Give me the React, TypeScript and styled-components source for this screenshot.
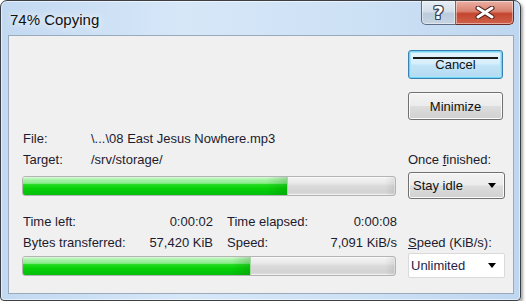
import React from "react";
import styled, { createGlobalStyle } from "styled-components";

const GlobalStyle = createGlobalStyle`
  html, body {
    margin: 0;
    padding: 0;
    background: #ffffff;
  }
  body {
    font-family: "Liberation Sans", Arial, sans-serif;
    font-size: 13px;
    color: #1d1b2e;
  }
`;

const Window = styled.div`
  box-sizing: border-box;
  width: 521px;
  height: 301px;
  border: 1px solid #3c3f44;
  border-radius: 7px 7px 4px 4px;
  padding: 0 6px 6px 7px;
  display: flex;
  flex-direction: column;
  background: linear-gradient(to right, #c2d9f1 0%, #d6e7f8 35%, #cde1f5 70%, #bed6ef 100%);
  box-shadow: 2px 2px 3px rgba(0, 0, 0, 0.35), inset 0 0 0 1px rgba(255, 255, 255, 0.55);
`;

const TitleBar = styled.div`
  height: 34px;
  display: flex;
  align-items: flex-start;
  flex-shrink: 0;
`;

const Title = styled.div`
  font-size: 15px;
  line-height: 17px;
  padding: 10px 0 0 2px;
  color: #111;
  text-shadow: 0 0 6px rgba(255, 255, 255, 0.95), 0 0 12px rgba(255, 255, 255, 0.85);
`;

const CaptionButtons = styled.div`
  margin-left: auto;
  display: flex;
  height: 24px;
`;

const CaptionButton = styled.div<{ $variant: "help" | "close" }>`
  box-sizing: border-box;
  height: 24px;
  width: ${(p) => (p.$variant === "help" ? 35 : 58)}px;
  display: flex;
  align-items: center;
  justify-content: center;
  border: 1px solid ${(p) => (p.$variant === "help" ? "#5f6e82" : "#6e2a22")};
  border-top: none;
  border-radius: ${(p) => (p.$variant === "help" ? "0 0 0 5px" : "0 0 5px 0")};
  border-left: ${(p) => (p.$variant === "close" ? "none" : undefined)};
  background: ${(p) =>
    p.$variant === "help"
      ? "linear-gradient(to bottom, #e6edf5 0%, #d4dfeb 45%, #bccbdc 55%, #c6d4e3 100%)"
      : "linear-gradient(to bottom, #eab0a4 0%, #d9826f 45%, #c4452f 55%, #d0624a 100%)"};
  box-shadow: inset 0 0 0 1px rgba(255, 255, 255, 0.45);
`;

const HelpGlyph = styled.span`
  font-family: "DejaVu Sans", sans-serif;
  font-weight: 700;
  font-size: 18px;
  line-height: 18px;
  color: #ffffff;
  text-shadow: 1px 0 0 #3b4350, -1px 0 0 #3b4350, 0 1px 0 #3b4350, 0 -1px 0 #3b4350,
    1px 1px 0 #3b4350, -1px -1px 0 #3b4350, 1px -1px 0 #3b4350, -1px 1px 0 #3b4350;
`;

const Client = styled.div`
  flex: 1;
  box-sizing: border-box;
  border: 1px solid #9aa9bb;
  background: #f0f0f0;
  display: flex;
  padding: 0 0 0 13px;
  gap: 12px;
`;

const LeftColumn = styled.div`
  width: 374px;
  display: flex;
  flex-direction: column;
  padding-top: 92px;
`;

const RightColumn = styled.div`
  width: 97px;
  display: flex;
  flex-direction: column;
  padding-top: 14px;
`;

const Line = styled.div`
  height: 21px;
  line-height: 21px;
  white-space: nowrap;
`;

const InfoRow = styled(Line)`
  display: grid;
  grid-template-columns: 68px 1fr;
  padding-left: 1px;
`;

const StatRow = styled(Line)<{ $gap?: number }>`
  display: grid;
  grid-template-columns: 190px 170px;
  column-gap: 14px;
  padding-left: 1px;
  margin-top: ${(p) => p.$gap ?? 0}px;
`;

const StatCell = styled.div`
  display: flex;
  justify-content: space-between;
`;

const Track = styled.div<{ $gap: number }>`
  box-sizing: border-box;
  height: 20px;
  margin-top: ${(p) => p.$gap}px;
  border: 1px solid #b4b4b4;
  border-radius: 3px;
  overflow: hidden;
  background: linear-gradient(to bottom, #f4f4f4 0%, #e8e8e8 35%, #dadada 50%, #d3d3d3 85%, #e4e4e4 100%);
  box-shadow: inset 0 0 0 1px rgba(255, 255, 255, 0.5);
  position: relative;

  &::after {
    content: "";
    position: absolute;
    top: 0;
    bottom: 0;
    right: 0;
    width: 10px;
    background: linear-gradient(to right, rgba(0, 0, 0, 0), rgba(0, 0, 0, 0.08));
  }
`;

const Fill = styled.div`
  height: 100%;
  background: linear-gradient(to right, rgba(0, 90, 0, 0) 92%, rgba(0, 90, 0, 0.2) 100%),
    linear-gradient(to bottom, #dafadb 0%, #a8f2a8 15%, #8aec8a 35%, #22dc22 42%, #06d006 65%, #04bd10 100%);
  border-right: 1px solid #a6d7a6;
`;

const Button = styled.div<{ $primary?: boolean; $height: number; $gap: number }>`
  box-sizing: border-box;
  height: ${(p) => p.$height}px;
  margin-top: ${(p) => p.$gap}px;
  width: 95px;
  display: flex;
  align-items: center;
  justify-content: center;
  border-radius: 3px;
  position: relative;
  color: #111;
  border: 1px solid ${(p) => (p.$primary ? "#3c7fb1" : "#707070")};
  background: ${(p) =>
    p.$primary
      ? "linear-gradient(to bottom, #e6f4fc 0%, #d6eefb 48%, #c2e4f7 52%, #b4daf0 100%)"
      : "linear-gradient(to bottom, #f3f3f3 0%, #ececec 48%, #dddddd 52%, #d0d0d0 100%)"};
  box-shadow: ${(p) =>
    p.$primary
      ? "inset 0 0 0 1px #6fd3f7, inset 0 0 0 2px #a9e4f8"
      : "inset 0 0 0 1px #fbfbfb"};
`;

const FocusLine = styled.span`
  position: absolute;
  left: 4px;
  right: 4px;
  top: 6px;
  height: 2px;
  background: #1a1a1a;
`;

const Label = styled(Line)<{ $gap: number }>`
  margin-top: ${(p) => p.$gap}px;
`;

const Combo = styled.div<{ $editable?: boolean; $gap: number; $height: number }>`
  box-sizing: border-box;
  height: ${(p) => p.$height}px;
  margin-top: ${(p) => p.$gap}px;
  width: 97px;
  display: flex;
  align-items: center;
  padding: 0 8px 0 ${(p) => (p.$editable ? 2 : 4)}px;
  border-radius: ${(p) => (p.$editable ? 2 : 3)}px;
  border: 1px solid ${(p) => (p.$editable ? "#dadada" : "#707070")};
  background: ${(p) =>
    p.$editable
      ? "#ffffff"
      : "linear-gradient(to bottom, #f3f3f3 0%, #ececec 48%, #dddddd 52%, #d0d0d0 100%)"};
  box-shadow: ${(p) => (p.$editable ? "none" : "inset 0 0 0 1px #fbfbfb")};
  color: ${(p) => (p.$editable ? "#2a1b48" : "#111")};
`;

const ComboText = styled.span`
  flex: 1;
`;

const Arrow = styled.span`
  width: 0;
  height: 0;
  border-left: 4px solid transparent;
  border-right: 4px solid transparent;
  border-top: 5px solid #000;
`;

function CloseGlyph() {
  return (
    <svg width="20" height="13" viewBox="0 0 20 13">
      <path d="M3 2 L17 11 M17 2 L3 11" stroke="#4a1d17" strokeWidth="5" strokeLinecap="round" />
      <path d="M3 2 L17 11 M17 2 L3 11" stroke="#ffffff" strokeWidth="3" strokeLinecap="round" />
    </svg>
  );
}

function ProgressBar({ percent, gap }: { percent: number; gap: number }) {
  return (
    <Track $gap={gap}>
      <Fill style={{ width: `${percent}%` }} />
    </Track>
  );
}

export default function App() {
  return (
    <>
      <GlobalStyle />
      <Window>
        <TitleBar>
          <Title>74% Copying</Title>
          <CaptionButtons>
            <CaptionButton $variant="help">
              <HelpGlyph>?</HelpGlyph>
            </CaptionButton>
            <CaptionButton $variant="close">
              <CloseGlyph />
            </CaptionButton>
          </CaptionButtons>
        </TitleBar>
        <Client>
          <LeftColumn>
            <InfoRow>
              <span>File:</span>
              <span>\...\08 East Jesus Nowhere.mp3</span>
            </InfoRow>
            <InfoRow>
              <span>Target:</span>
              <span>/srv/storage/</span>
            </InfoRow>
            <ProgressBar percent={71} gap={6} />
            <StatRow $gap={15}>
              <StatCell>
                <span>Time left:</span>
                <span>0:00:02</span>
              </StatCell>
              <StatCell>
                <span>Time elapsed:</span>
                <span>0:00:08</span>
              </StatCell>
            </StatRow>
            <StatRow>
              <StatCell>
                <span>Bytes transferred:</span>
                <span>57,420 KiB</span>
              </StatCell>
              <StatCell>
                <span>Speed:</span>
                <span>7,091 KiB/s</span>
              </StatCell>
            </StatRow>
            <ProgressBar percent={61} gap={3} />
          </LeftColumn>
          <RightColumn>
            <Button $primary $height={29} $gap={0}>
              <FocusLine />
              Cancel
            </Button>
            <Button $height={28} $gap={13}>
              Minimize
            </Button>
            <Label $gap={29}>
              Once <u>f</u>inished:
            </Label>
            <Combo $gap={2} $height={27}>
              <ComboText>Stay idle</ComboText>
              <Arrow />
            </Combo>
            <Label $gap={33}>
              <u>S</u>peed (KiB/s):
            </Label>
            <Combo $editable $gap={0} $height={25}>
              <ComboText>Unlimited</ComboText>
              <Arrow />
            </Combo>
          </RightColumn>
        </Client>
      </Window>
    </>
  );
}
